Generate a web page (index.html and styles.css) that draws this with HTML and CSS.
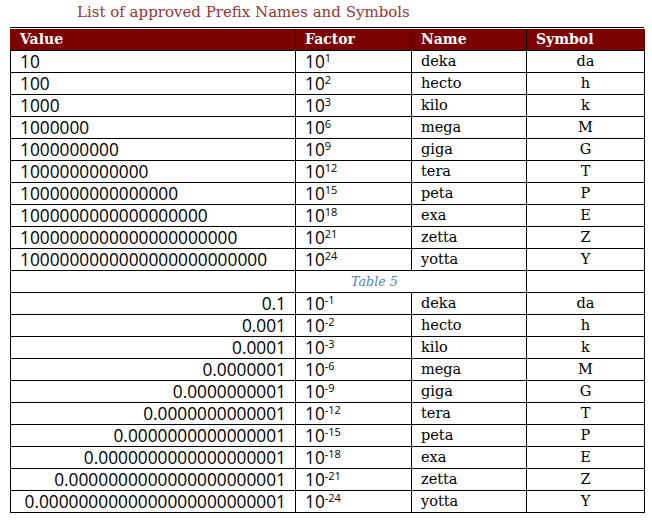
FILE: index.html
```html
<!DOCTYPE html>
<html>
<head>
<meta charset="utf-8">
<link rel="stylesheet" href="styles.css">
</head>
<body>
<h1 class="title">List of approved Prefix Names and Symbols</h1>
<div class="frame">
<table class="prefixes">
<colgroup><col class="c-value"><col class="c-factor"><col class="c-name"><col class="c-symbol"></colgroup>
<thead>
<tr><th>Value</th><th>Factor</th><th>Name</th><th>Symbol</th></tr>
</thead>
<tbody>
<tr><td class="num">10</td><td class="num">10<sup>1</sup></td><td class="name">deka</td><td class="sym">da</td></tr>
<tr><td class="num">100</td><td class="num">10<sup>2</sup></td><td class="name">hecto</td><td class="sym">h</td></tr>
<tr><td class="num">1000</td><td class="num">10<sup>3</sup></td><td class="name">kilo</td><td class="sym">k</td></tr>
<tr><td class="num">1000000</td><td class="num">10<sup>6</sup></td><td class="name">mega</td><td class="sym">M</td></tr>
<tr><td class="num">1000000000</td><td class="num">10<sup>9</sup></td><td class="name">giga</td><td class="sym">G</td></tr>
<tr><td class="num">1000000000000</td><td class="num">10<sup>12</sup></td><td class="name">tera</td><td class="sym">T</td></tr>
<tr><td class="num">1000000000000000</td><td class="num">10<sup>15</sup></td><td class="name">peta</td><td class="sym">P</td></tr>
<tr><td class="num">1000000000000000000</td><td class="num">10<sup>18</sup></td><td class="name">exa</td><td class="sym">E</td></tr>
<tr><td class="num">1000000000000000000000</td><td class="num">10<sup>21</sup></td><td class="name">zetta</td><td class="sym">Z</td></tr>
<tr><td class="num">1000000000000000000000000</td><td class="num">10<sup>24</sup></td><td class="name">yotta</td><td class="sym">Y</td></tr>
<tr><td></td><td colspan="2" class="caption">Table 5</td><td></td></tr>
<tr><td class="num right">0.1</td><td class="num">10<sup>-1</sup></td><td class="name">deka</td><td class="sym">da</td></tr>
<tr><td class="num right">0.001</td><td class="num">10<sup>-2</sup></td><td class="name">hecto</td><td class="sym">h</td></tr>
<tr><td class="num right">0.0001</td><td class="num">10<sup>-3</sup></td><td class="name">kilo</td><td class="sym">k</td></tr>
<tr><td class="num right">0.0000001</td><td class="num">10<sup>-6</sup></td><td class="name">mega</td><td class="sym">M</td></tr>
<tr><td class="num right">0.0000000001</td><td class="num">10<sup>-9</sup></td><td class="name">giga</td><td class="sym">G</td></tr>
<tr><td class="num right">0.0000000000001</td><td class="num">10<sup>-12</sup></td><td class="name">tera</td><td class="sym">T</td></tr>
<tr><td class="num right">0.0000000000000001</td><td class="num">10<sup>-15</sup></td><td class="name">peta</td><td class="sym">P</td></tr>
<tr><td class="num right">0.0000000000000000001</td><td class="num">10<sup>-18</sup></td><td class="name">exa</td><td class="sym">E</td></tr>
<tr><td class="num right">0.0000000000000000000001</td><td class="num">10<sup>-21</sup></td><td class="name">zetta</td><td class="sym">Z</td></tr>
<tr><td class="num right">0.0000000000000000000000001</td><td class="num">10<sup>-24</sup></td><td class="name">yotta</td><td class="sym">Y</td></tr>
</tbody>
</table>
</div>
</body>
</html>
```

FILE: styles.css
```css
html, body {
  margin: 0;
  padding: 0;
  background: #ffffff;
}

.title {
  margin: 0 0 6px 0;
  padding: 3px 0 0 77px;
  font-family: "DejaVu Serif", serif;
  font-weight: normal;
  font-size: 15px;
  line-height: 18px;
  color: #943634;
}

.frame {
  margin-left: 10px;
  width: 634px;
  border-top: 1px solid #000;
  padding-top: 1px;
}

.prefixes {
  border-collapse: collapse;
  table-layout: fixed;
  width: 634px;
}

.c-value { width: 285px; }
.c-factor { width: 116px; }
.c-name { width: 115px; }
.c-symbol { width: 118px; }

.prefixes th {
  background: #7b0000;
  color: #ffffff;
  font-family: "DejaVu Serif", serif;
  font-weight: bold;
  font-size: 14px;
  text-align: left;
  height: 21px;
  padding: 0 9px;
  line-height: 21px;
  border-left: 1px solid #000;
  border-bottom: 1px solid #000;
}

.prefixes th:first-child {
  border-left: 1px solid #7b0000;
}

.prefixes td {
  border: 1px solid #000;
  height: 21px;
  padding: 0 9px;
  line-height: 21px;
  color: #000;
  white-space: nowrap;
}

.prefixes .num {
  font-family: "Open Sans", sans-serif;
  font-size: 17.3px;
}

.prefixes .right {
  text-align: right;
}

.prefixes .name,
.prefixes .sym {
  font-family: "DejaVu Serif", serif;
  font-size: 14.5px;
}

.prefixes .sym {
  text-align: center;
}

.prefixes sup {
  font-size: 11px;
  line-height: 0;
  vertical-align: 6px;
}

.prefixes .caption {
  font-family: "DejaVu Serif", serif;
  font-style: italic;
  font-size: 12.7px;
  color: #4f81bd;
  padding-left: 55px;
}
```
